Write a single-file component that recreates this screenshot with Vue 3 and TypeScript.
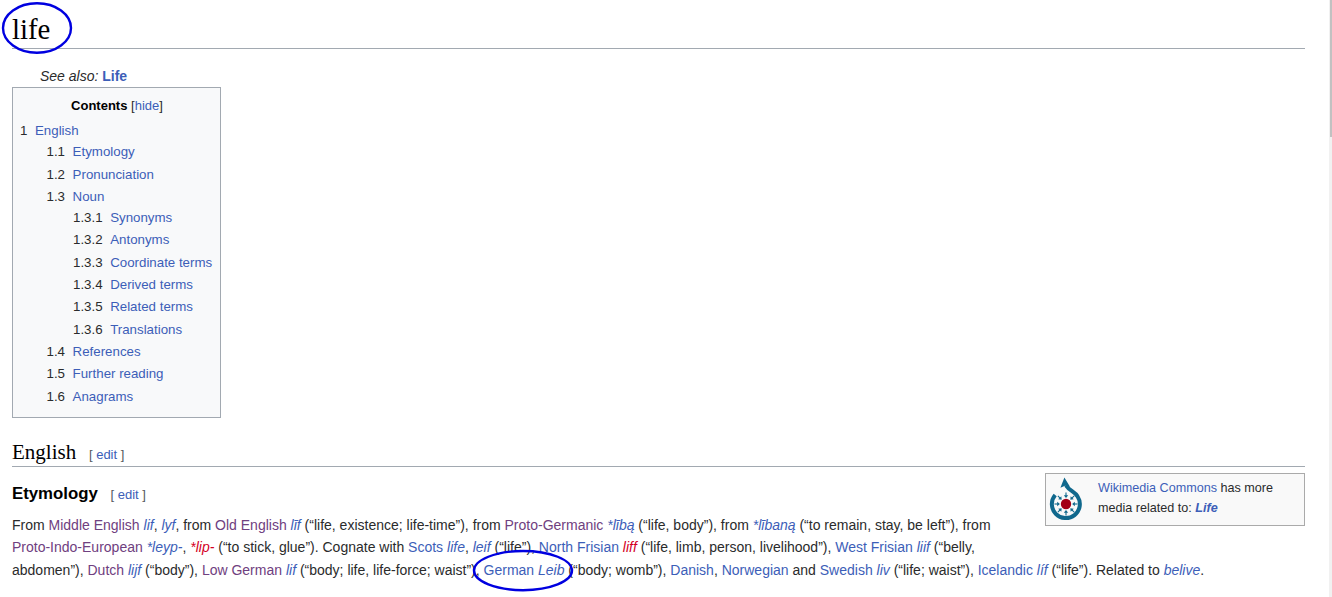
<template>
  <div class="page">
    <main class="content">
      <h1 class="title">life</h1>
      <div class="see-also"><i>See also:</i> <a class="blue"><b>Life</b></a></div>
      <div class="toc">
        <div class="toc-title"><b>Contents</b> <span class="hide">[<a class="blue">hide</a>]</span></div>
        <ul class="toc-list">
          <li v-for="item in toc" :key="item.num" :class="`level-${item.num.split('.').length}`">
            <span class="num">{{ item.num }}</span><a class="blue">{{ item.label }}</a>
          </li>
        </ul>
      </div>
      <h2 class="lang">English <span class="edit">[ <a class="blue">edit</a> ]</span></h2>
      <div class="commons">
        <svg class="commons-icon" viewBox="6 4 40 50" width="40" height="50">
          <path class="ring" d="M15.2 25 A14 14 0 1 0 37.6 26.5 C35 21.5 29.5 21 26 15.5" />
          <path d="M24.4 7.5 L20.4 17.8 L25 15.8 L30 16.8 Z" fill="#10688d" />
          <circle cx="26" cy="34" r="5.2" fill="#a30016" />
          <g v-for="angle in arrowAngles" :key="angle" :transform="`rotate(${angle} 26 34)`">
            <path d="M26 22.5 V26" stroke="#10688d" stroke-width="1.1" />
            <path d="M23.8 25.2 H28.2 L26 27.9 Z" fill="#10688d" />
          </g>
        </svg>
        <div class="commons-text"><a class="blue">Wikimedia Commons</a> has more media related to: <a class="blue"><b><i>Life</i></b></a></div>
      </div>
      <h3 class="section">Etymology <span class="edit">[ <a class="blue">edit</a> ]</span></h3>
      <p class="body-text">
        From <a class="purple">Middle English</a> <a class="blue"><i>lif</i></a>, <a class="blue"><i>lyf</i></a>, from <a class="purple">Old English</a> <a class="blue"><i>līf</i></a> (“life, existence; life-time”), from <a class="purple">Proto-Germanic</a> <a class="blue"><i>*lībą</i></a> (“life, body”), from <a class="blue"><i>*lībaną</i></a> (“to remain, stay, be left”), from
        <a class="purple nowrap">Proto-Indo-European</a> <a class="blue"><i>*leyp-</i></a>, <a class="red"><i>*lip-</i></a> (“to stick, glue”). Cognate with <a class="blue">Scots</a> <a class="blue"><i>life</i></a>, <a class="blue"><i>leif</i></a> (“life”), <a class="blue">North Frisian</a> <a class="red"><i>liff</i></a> (“life, limb, person, livelihood”), <a class="blue">West Frisian</a> <a class="blue"><i>liif</i></a> (“belly, abdomen”), <a class="purple">Dutch</a> <a class="blue"><i>lijf</i></a> (“body”), <a class="purple">Low German</a> <a class="blue"><i>lif</i></a> (“body; life, life-force; waist”), <a class="blue">German</a> <a class="blue"><i>Leib</i></a> (“body; womb”), <a class="blue">Danish</a>, <a class="blue">Norwegian</a> and <a class="blue">Swedish</a> <a class="blue"><i>liv</i></a> (“life; waist”), <a class="blue">Icelandic</a> <a class="blue"><i>líf</i></a> (“life”). Related to <a class="blue"><i>belive</i></a>.
      </p>
    </main>
    <svg class="marks" width="1332" height="597" viewBox="0 0 1332 597">
      <ellipse cx="37" cy="28" rx="34" ry="24.8" />
      <ellipse cx="523" cy="570.6" rx="49" ry="19.6" />
    </svg>
    <div class="scrollbar"><div class="thumb"></div></div>
  </div>
</template>

<script setup lang="ts">
interface TocItem {
  num: string
  label: string
}

const toc: TocItem[] = [
  { num: '1', label: 'English' },
  { num: '1.1', label: 'Etymology' },
  { num: '1.2', label: 'Pronunciation' },
  { num: '1.3', label: 'Noun' },
  { num: '1.3.1', label: 'Synonyms' },
  { num: '1.3.2', label: 'Antonyms' },
  { num: '1.3.3', label: 'Coordinate terms' },
  { num: '1.3.4', label: 'Derived terms' },
  { num: '1.3.5', label: 'Related terms' },
  { num: '1.3.6', label: 'Translations' },
  { num: '1.4', label: 'References' },
  { num: '1.5', label: 'Further reading' },
  { num: '1.6', label: 'Anagrams' },
]

const arrowAngles = [0, 45, 90, 135, 180, 225, 270, 315]
</script>

<style>
html,
body {
  margin: 0;
  height: 597px;
  overflow: hidden;
  background: #fff;
}
</style>

<style scoped>
.page {
  position: relative;
  width: 1332px;
  height: 597px;
  overflow: hidden;
  font-family: "Liberation Sans", Arial, sans-serif;
  font-size: 14px;
  line-height: 22.4px;
  color: #2a2b2c;
}

.content {
  padding: 0 27px 0 12px;
}

.blue {
  color: #3c5eb8;
}

.purple {
  color: #6f4080;
}

.red {
  color: #d4001f;
}

.nowrap {
  white-space: nowrap;
}

.title {
  margin: 0;
  height: 48px;
  border-bottom: 1px solid #a2a9b1;
  font-family: "Liberation Serif", serif;
  font-weight: 400;
  font-size: 28.8px;
  line-height: 59px;
  color: #000;
}

.see-also {
  margin-top: 16px;
  padding-left: 28px;
  height: 22px;
}

.toc {
  width: 207px;
  height: 329px;
  border: 1px solid #a2a9b1;
  background: #f8f9fa;
}

.toc-title {
  text-align: center;
  height: 32px;
  line-height: 36px;
  padding-left: 1px;
  font-size: 13px;
  color: #000;
}

.hide {
  color: #2a2b2c;
}

.toc-list {
  list-style: none;
  margin: 0;
  padding: 0 0 0 7px;
  font-size: 13.3px;
}

.toc-list li {
  height: 22.35px;
  line-height: 22.35px;
  white-space: nowrap;
}

.num {
  padding-right: 7.6px;
}

.toc-list .level-2 {
  padding-left: 26.5px;
}

.toc-list .level-3 {
  padding-left: 53px;
}

.toc-list .level-1 + .level-2 {
  margin-top: -1.1px;
}

.toc-list .level-2 + .level-3 {
  margin-top: -1.45px;
}

.lang {
  margin: 20px 0 0;
  height: 28px;
  border-bottom: 1px solid #a2a9b1;
  font-family: "Liberation Serif", serif;
  font-weight: 400;
  font-size: 21px;
  line-height: 28px;
  color: #000;
}

.edit {
  margin-left: 7.5px;
  font-family: "Liberation Sans", Arial, sans-serif;
  font-size: 13px;
  font-weight: 400;
  color: #54595d;
}

.section {
  margin: 0;
  padding-top: 16px;
  font-size: 16.8px;
  line-height: 22px;
  font-weight: 700;
  color: #000;
}

.section .edit {
  margin-left: 8px;
}

.body-text {
  margin: 8px 0 0;
}

.commons {
  float: right;
  display: flex;
  width: 258px;
  height: 51px;
  margin: 6px 0 14px 12px;
  border: 1px solid #aaa;
  background: #f9f9f9;
}

.commons-icon {
  flex: none;
}

.commons-text {
  margin: 3px 0 0 12px;
  padding-top: 1px;
  font-size: 12.6px;
  line-height: 20px;
  width: 190px;
}

.ring {
  fill: none;
  stroke: #10688d;
  stroke-width: 4;
}

.marks {
  position: absolute;
  left: 0;
  top: 0;
  pointer-events: none;
}

.marks ellipse {
  fill: none;
  stroke: #0000e0;
  stroke-width: 2.4;
}

.scrollbar {
  position: absolute;
  right: 0;
  top: 0;
  width: 3px;
  height: 597px;
  background: #f1f1f1;
}

.thumb {
  width: 2px;
  height: 137px;
  margin-left: 1px;
  background: #c1c1c1;
}
</style>
